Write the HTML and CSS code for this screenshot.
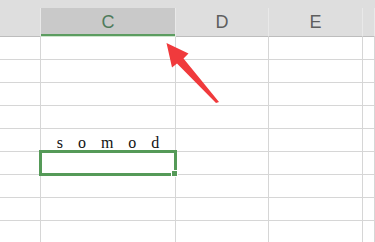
FILE: index.html
```html
<!DOCTYPE html>
<html lang="en">
<head>
    <meta charset="UTF-8">
    <meta name="viewport" content="width=device-width, initial-scale=1.0">
    <title>Sheet</title>
    <link rel="stylesheet" href="styles.css">
</head>
<body>
    <div class="sheet">
        <div class="topbar"></div>
        <div class="grid">
            <div class="hd"></div>
            <div class="hd active">C</div>
            <div class="hd">D</div>
            <div class="hd">E</div>
            <div class="hd"></div>

            <div class="cell"></div><div class="cell"></div><div class="cell"></div><div class="cell"></div><div class="cell"></div>
            <div class="cell"></div><div class="cell"></div><div class="cell"></div><div class="cell"></div><div class="cell"></div>
            <div class="cell"></div><div class="cell"></div><div class="cell"></div><div class="cell"></div><div class="cell"></div>
            <div class="cell"></div><div class="cell"></div><div class="cell"></div><div class="cell"></div><div class="cell"></div>

            <div class="cell"></div>
            <div class="cell text">s o m o d</div>
            <div class="cell"></div><div class="cell"></div><div class="cell"></div>

            <div class="cell"></div>
            <div class="cell selected"><div class="sel"><span class="handle"></span></div></div>
            <div class="cell"></div><div class="cell"></div><div class="cell"></div>

            <div class="cell"></div><div class="cell"></div><div class="cell"></div><div class="cell"></div><div class="cell"></div>
            <div class="cell"></div><div class="cell"></div><div class="cell"></div><div class="cell"></div><div class="cell"></div>
            <div class="cell"></div><div class="cell"></div><div class="cell"></div><div class="cell"></div><div class="cell"></div>
        </div>

        <!-- annotation arrow pointing at the C header -->
        <svg class="arrow" width="65" height="70" viewBox="0 0 65 70">
            <polygon points="6.5,5 28.5,15.5 23.5,20.5 59,64 56,65 17,25.5 12,29.5" fill="#f03a3c"/>
        </svg>
    </div>
</body>
</html>
```

FILE: styles.css
```css
body {
    margin: 0;
    background: #fff;
    font-family: "Liberation Sans", Arial, sans-serif;
    overflow: hidden;
}

.sheet {
    position: relative;
    width: 375px;
    height: 242px;
    overflow: hidden;
}

.topbar {
    height: 8px;
    background: #dedede;
}

.grid {
    display: grid;
    grid-template-columns: 41px 135px 93px 94px 1fr;
    grid-template-rows: 29px;
    grid-auto-rows: 23px;
}

.hd,
.cell {
    box-sizing: border-box;
    border-right: 1px solid #d6d6d6;
    border-bottom: 1px solid #d6d6d6;
}

.hd {
    background: #dedede;
    border-right-color: #e9e9e9;
    border-bottom-color: #bdbdbd;
    display: flex;
    align-items: center;
    justify-content: center;
    font-size: 18px;
    color: #5e5e5e;
    padding-top: 1px;
}

.hd.active {
    background: #c9c9c9;
    color: #4f7b5b;
    border-bottom-color: #cde6cd;
    box-shadow: inset 0 -2px 0 #5c9c60;
}

.cell.text {
    display: flex;
    align-items: flex-end;
    justify-content: center;
    font-family: "Liberation Serif", "Times New Roman", serif;
    font-size: 16px;
    line-height: 17px;
    word-spacing: 11px;
    color: #111;
}

.cell.selected {
    position: relative;
}

.sel {
    position: absolute;
    top: -2px;
    left: -2px;
    right: -2px;
    bottom: -2px;
    border: 3px solid #559a58;
}

.handle {
    position: absolute;
    right: -3px;
    bottom: -3px;
    width: 5px;
    height: 5px;
    background: #559a58;
    outline: 1px solid #fff;
}

.arrow {
    position: absolute;
    left: 160px;
    top: 38px;
}
```
